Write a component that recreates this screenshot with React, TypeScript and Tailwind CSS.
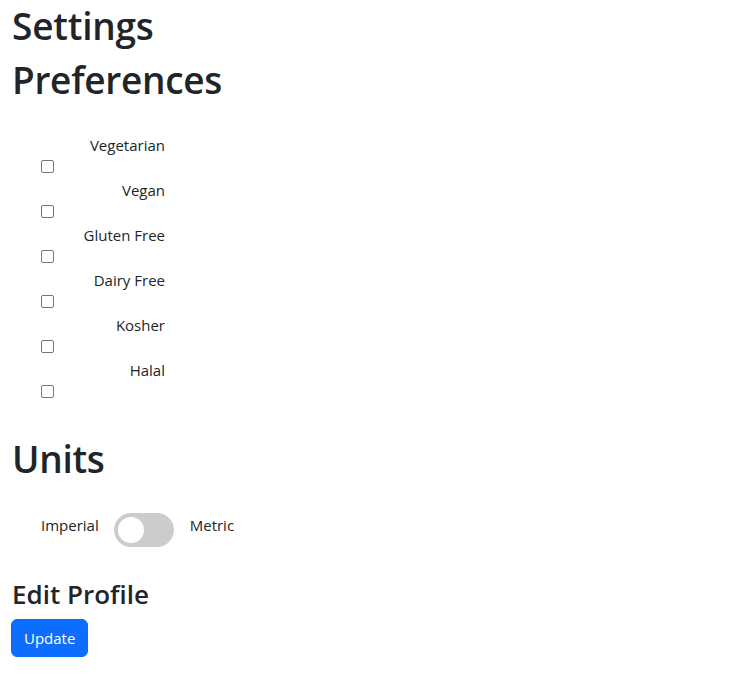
import { useState } from 'react';

const DIETS = ['Vegetarian', 'Vegan', 'Gluten Free', 'Dairy Free', 'Kosher', 'Halal'];

export default function App() {
  const [checked, setChecked] = useState<Record<string, boolean>>({});
  const [metric, setMetric] = useState(false);

  return (
    <div className="min-h-[686px] bg-white px-3 text-[#212529] font-['Open_Sans',sans-serif]">
      <h1 className="text-[37px] leading-[52px] font-semibold tracking-[-0.2px] mb-1">Settings</h1>
      <h1 className="text-[37px] leading-[48px] font-semibold tracking-[-0.3px] mb-2">Preferences</h1>

      <div className="pt-[21px] pl-[29px]">
        {DIETS.map(d => (
          <div key={d}>
            <label htmlFor={d} className="block w-[124px] text-right text-[15px] leading-6">{d}</label>
            <div className="h-[21px] flex items-center">
              <input
                id={d}
                type="checkbox"
                checked={!!checked[d]}
                onChange={e => setChecked({ ...checked, [d]: e.target.checked })}
                className="w-[13px] h-[13px] m-0 -mt-0.5 appearance-none rounded-[2px] border border-[#767676] bg-white"
              />
            </div>
          </div>
        ))}
      </div>

      <h1 className="mt-[32px] text-[37px] leading-[48px] font-semibold tracking-[-0.3px]">Units</h1>

      <div className="mt-[30px] pl-[29px] flex items-start text-[15px] leading-6">
        <span>Imperial</span>
        <button
          onClick={() => setMetric(!metric)}
          className={`relative ml-[15px] w-[60px] h-[34px] rounded-full transition-colors ${metric ? 'bg-[#2196f3]' : 'bg-[#cccccc]'}`}
        >
          <span className={`absolute top-1 left-1 w-[26px] h-[26px] rounded-full bg-white transition-transform ${metric ? 'translate-x-[26px]' : ''}`} />
        </button>
        <span className="ml-4">Metric</span>
      </div>

      <h3 className="mt-[30px] text-[26px] leading-[34px] font-semibold mb-2">Edit Profile</h3>
      <button className="bg-[#0d6efd] hover:bg-[#0b5ed7] text-white text-[15px] leading-6 px-3 py-1.5 border border-[#0d6efd] rounded-md -ml-px">
        Update
      </button>
    </div>
  );
}
